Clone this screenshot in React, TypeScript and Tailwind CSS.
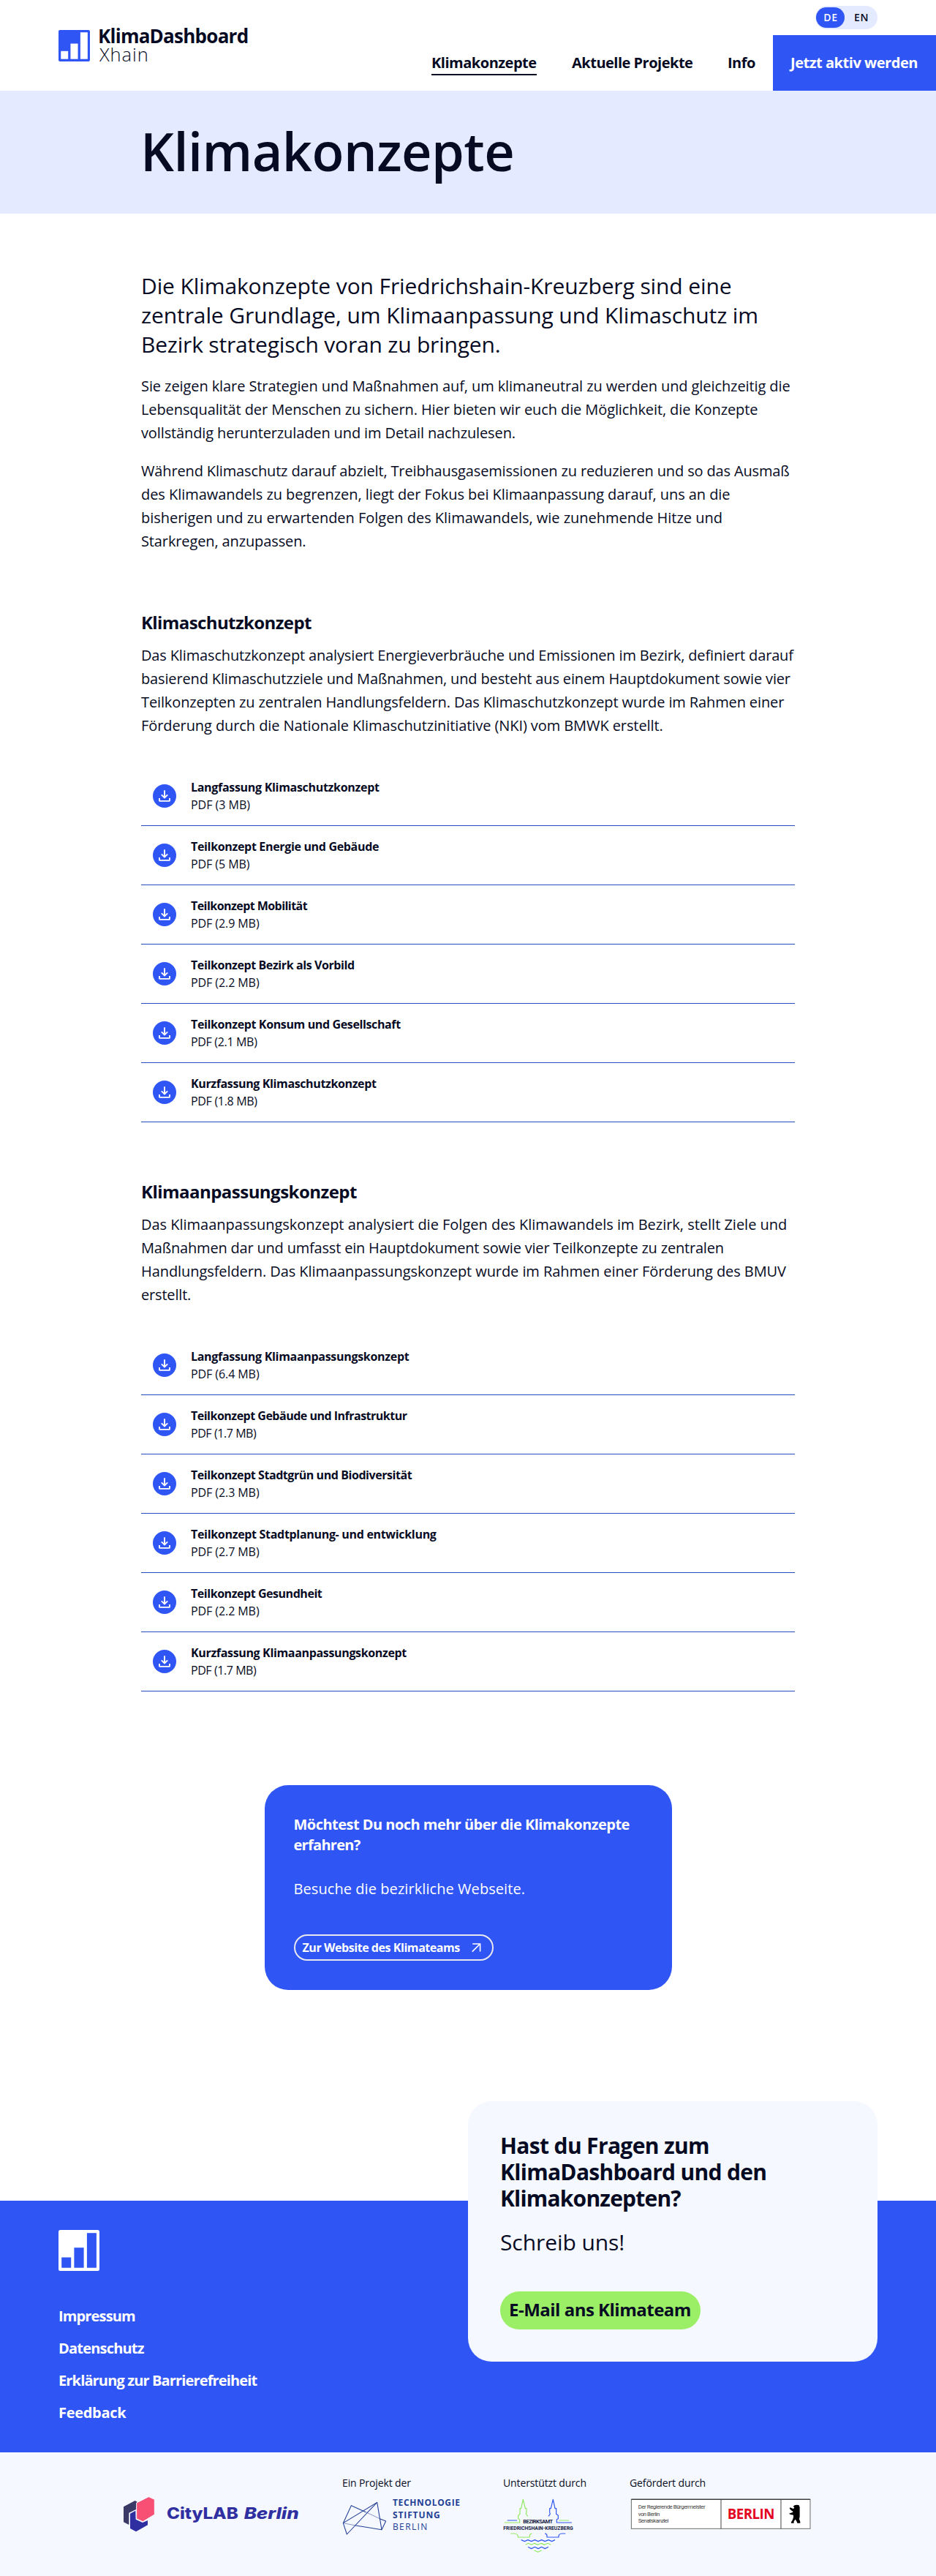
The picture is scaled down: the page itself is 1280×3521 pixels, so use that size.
import React from "react";

type Line = [text: string, tracking: string];

const intro: Line[] = [
  ["Die Klimakonzepte von Friedrichshain-Kreuzberg sind eine", "tracking-[-0.11px]"],
  ["zentrale Grundlage, um Klimaanpassung und Klimaschutz im", "tracking-[-0.09px]"],
  ["Bezirk strategisch voran zu bringen.", "tracking-[-0.19px]"],
];

const about: Line[] = [
  ["Sie zeigen klare Strategien und Maßnahmen auf, um klimaneutral zu werden und gleichzeitig die", "tracking-[-0.088px]"],
  ["Lebensqualität der Menschen zu sichern. Hier bieten wir euch die Möglichkeit, die Konzepte", "tracking-[-0.101px]"],
  ["vollständig herunterzuladen und im Detail nachzulesen.", "tracking-[-0.12px]"],
];

const difference: Line[] = [
  ["Während Klimaschutz darauf abzielt, Treibhausgasemissionen zu reduzieren und so das Ausmaß", "tracking-[-0.143px]"],
  ["des Klimawandels zu begrenzen, liegt der Fokus bei Klimaanpassung darauf, uns an die", "tracking-[-0.053px]"],
  ["bisherigen und zu erwartenden Folgen des Klimawandels, wie zunehmende Hitze und", "tracking-[-0.022px]"],
  ["Starkregen, anzupassen.", "tracking-[-0.12px]"],
];

type Download = { title: string; tracking: string; size: string };
type Concept = { title: string; titleTracking: string; text: Line[]; files: Download[] };

const concepts: Concept[] = [
  {
    title: "Klimaschutzkonzept",
    titleTracking: "tracking-[-0.6px]",
    text: [
      ["Das Klimaschutzkonzept analysiert Energieverbräuche und Emissionen im Bezirk, definiert darauf", "tracking-[-0.148px]"],
      ["basierend Klimaschutzziele und Maßnahmen, und besteht aus einem Hauptdokument sowie vier", "tracking-[-0.142px]"],
      ["Teilkonzepten zu zentralen Handlungsfeldern. Das Klimaschutzkonzept wurde im Rahmen einer", "tracking-[-0.122px]"],
      ["Förderung durch die Nationale Klimaschutzinitiative (NKI) vom BMWK erstellt.", "tracking-[-0.083px]"],
    ],
    files: [
      { title: "Langfassung Klimaschutzkonzept", tracking: "tracking-[-0.3px]", size: "3 MB" },
      { title: "Teilkonzept Energie und Gebäude", tracking: "tracking-[-0.33px]", size: "5 MB" },
      { title: "Teilkonzept Mobilität", tracking: "tracking-[-0.55px]", size: "2.9 MB" },
      { title: "Teilkonzept Bezirk als Vorbild", tracking: "tracking-[-0.4px]", size: "2.2 MB" },
      { title: "Teilkonzept Konsum und Gesellschaft", tracking: "tracking-[-0.37px]", size: "2.1 MB" },
      { title: "Kurzfassung Klimaschutzkonzept", tracking: "tracking-[-0.37px]", size: "1.8 MB" },
    ],
  },
  {
    title: "Klimaanpassungskonzept",
    titleTracking: "tracking-[-0.53px]",
    text: [
      ["Das Klimaanpassungskonzept analysiert die Folgen des Klimawandels im Bezirk, stellt Ziele und", "tracking-[-0.013px]"],
      ["Maßnahmen dar und umfasst ein Hauptdokument sowie vier Teilkonzepte zu zentralen", "tracking-[-0.191px]"],
      ["Handlungsfeldern. Das Klimaanpassungskonzept wurde im Rahmen einer Förderung des BMUV", "tracking-[-0.077px]"],
      ["erstellt.", "tracking-[-0.178px]"],
    ],
    files: [
      { title: "Langfassung Klimaanpassungskonzept", tracking: "tracking-[-0.3px]", size: "6.4 MB" },
      { title: "Teilkonzept Gebäude und Infrastruktur", tracking: "tracking-[-0.5px]", size: "1.7 MB" },
      { title: "Teilkonzept Stadtgrün und Biodiversität", tracking: "tracking-[-0.44px]", size: "2.3 MB" },
      { title: "Teilkonzept Stadtplanung- und entwicklung", tracking: "tracking-[-0.31px]", size: "2.7 MB" },
      { title: "Teilkonzept Gesundheit", tracking: "tracking-[-0.45px]", size: "2.2 MB" },
      { title: "Kurzfassung Klimaanpassungskonzept", tracking: "tracking-[-0.34px]", size: "1.7 MB" },
    ],
  },
];

const pdfTracking: Record<string, string> = {
  "3 MB": "tracking-[-0.01px]",
  "5 MB": "tracking-[-0.07px]",
  "1.8 MB": "tracking-[-0.31px]",
  "1.7 MB": "tracking-[-0.43px]",
  "2.1 MB": "tracking-[-0.33px]",
};

function Lines({ lines, className }: { lines: Line[]; className: string }) {
  return (
    <p className={className}>
      {lines.map(([text, tracking]) => (
        <span key={text} className={`block whitespace-nowrap ${tracking}`}>
          {text}
        </span>
      ))}
    </p>
  );
}

function BarsLogo({ className, bars }: { className: string; bars: string }) {
  return (
    <svg viewBox="0 0 56 56" className={className}>
      <rect width="56" height="56" rx="2.5" fill="currentColor" />
      <g fill={bars}>
        <rect x="4.2" y="37.5" width="13" height="14.2" />
        <rect x="21.4" y="24.2" width="13.2" height="27.5" />
        <rect x="38.9" y="4.2" width="13" height="47.5" />
      </g>
    </svg>
  );
}

function DownloadIcon() {
  return (
    <svg viewBox="0 0 32 32" className="h-8 w-8 shrink-0">
      <circle cx="16" cy="16" r="16" fill="#2f55f4" />
      <g fill="none" stroke="#fff" strokeWidth="1.9">
        <path d="M16 8.3V19" />
        <path d="M11.8 14.3 16 18.5 20.2 14.3" />
        <path d="M9 19v3.2a.7.7 0 0 0 .7.7h12.6a.7.7 0 0 0 .7-.7V19" />
      </g>
    </svg>
  );
}

function Header() {
  return (
    <header className="flex h-[124px] justify-between">
      <div className="flex items-start pt-10 pl-20">
        <BarsLogo className="mt-px h-[43px] w-[43px] text-[#2f55f4]" bars="#fff" />
        <div className="-mt-[3px] ml-[11px] leading-[25px]">
          <div className="text-[26px] font-bold tracking-[-0.75px]">KlimaDashboard</div>
          <div className="pl-[2px] text-[25.5px] font-light tracking-[0.9px]">Xhain</div>
        </div>
      </div>
      <div className="flex flex-col">
        <div className="flex h-12 justify-end pt-2 pr-20">
          <div className="flex h-8 items-center rounded-full bg-[#e4eaff] pl-px text-sm font-semibold">
            <span className="flex h-7 w-[39px] items-center justify-center rounded-full bg-[#2f55f4] pl-px tracking-[0.8px] text-white">DE</span>
            <span className="flex w-[45px] justify-center pl-px tracking-[0.6px]">EN</span>
          </div>
        </div>
        <nav className="flex h-[76px] items-stretch text-xl leading-7 font-bold whitespace-nowrap">
          <div className="mr-12 w-36 pt-6">
            <a className="block h-[31px] border-b-2 border-[#060b23] tracking-[-0.48px]">Klimakonzepte</a>
          </div>
          <a className="mr-12 w-[165px] pt-6 tracking-[-0.5px]">Aktuelle Projekte</a>
          <a className="mr-6 w-[38px] pt-6 tracking-[-0.5px]">Info</a>
          <a className="w-[223px] bg-[#2f55f4] pt-6 pl-6 tracking-[-0.46px] text-white">Jetzt aktiv werden</a>
        </nav>
      </div>
    </header>
  );
}

function ConceptSection({ concept }: { concept: Concept }) {
  return (
    <section className="mt-[79px]">
      <h2 className={`mb-[13px] text-2xl leading-8 font-bold ${concept.titleTracking}`}>{concept.title}</h2>
      <Lines lines={concept.text} className="mb-10 text-xl leading-8" />
      <ul>
        {concept.files.map((file) => (
          <li key={file.title} className="flex h-[81px] items-center border-b border-[#2b4bc4] pl-4">
            <DownloadIcon />
            <div className="-mt-px ml-5 leading-6 whitespace-nowrap">
              <div className={`font-bold ${file.tracking}`}>{file.title}</div>
              <div className={pdfTracking[file.size] ?? "tracking-[-0.08px]"}>PDF ({file.size})</div>
            </div>
          </li>
        ))}
      </ul>
    </section>
  );
}

function WebsiteCard() {
  return (
    <div className="mx-auto mt-32 h-[280px] w-[557px] rounded-[32px] bg-[#2f55f4] p-10 text-xl leading-7 whitespace-nowrap text-white">
      <p className="font-bold">
        <span className="block tracking-[-0.53px]">Möchtest Du noch mehr über die Klimakonzepte</span>
        <span className="block tracking-[-0.7px]">erfahren?</span>
      </p>
      <p className="mt-8 tracking-[0.07px]">Besuche die bezirkliche Webseite.</p>
      <a className="mt-12 flex h-9 w-[273px] items-center rounded-full border-2 border-[#e8e8ee] pl-2.5 text-base leading-6 font-bold">
        <span className="-mt-px w-[218px] tracking-[-0.44px]">Zur Website des Klimateams</span>
        <svg viewBox="0 0 24 24" className="ml-[7px] h-6 w-6" fill="none" stroke="currentColor" strokeWidth="1.6">
          <path d="M6.8 17.6 17.2 7.2M7.2 7h10.4v10.6" />
        </svg>
      </a>
    </div>
  );
}

function ContactCard() {
  return (
    <div className="-mt-[136px] h-[356px] w-[560px] rounded-[32px] bg-[#f5f8ff] pt-[43px] pl-11 text-[30px] leading-9 whitespace-nowrap">
      <p className="font-bold">
        <span className="block tracking-[-0.65px]">Hast du Fragen zum</span>
        <span className="block tracking-[-0.69px]">KlimaDashboard und den</span>
        <span className="block tracking-[-0.8px]">Klimakonzepten?</span>
      </p>
      <p className="mt-6 tracking-[-0.08px]">Schreib uns!</p>
      <a className="mt-[49px] flex h-[52px] w-[274px] items-center rounded-full bg-[#9bef66] pb-0.5 pl-3 text-2xl font-bold tracking-[-0.5px]">
        E-Mail ans Klimateam
      </a>
    </div>
  );
}

function CityLabLogo() {
  return (
    <svg viewBox="87 219 723 144" className="mt-[61px] h-12 w-[241px] overflow-visible">
      <path fill="#3a3a66" d="M87 259 134 234 143 239 138 270 109 284V333L87 322Z" />
      <path fill="#2f2fa2" d="M114 287 136 275 137 311 165 324 186 315V334L138 361 114 348Z" />
      <path fill="#f84f74" stroke="#f5f8ff" strokeWidth="3" d="M140 243 190 218 214 229V291L166 320 140 308Z" />
      <g fill="#2f2fa2" fontFamily="Inter" fontSize="65" fontWeight="800">
        <text x="264" y="309" textLength="293" lengthAdjust="spacingAndGlyphs">CityLAB</text>
        <text x="581" y="309" textLength="225" lengthAdjust="spacingAndGlyphs" fontStyle="italic">Berlin</text>
      </g>
    </svg>
  );
}

function TechnologieStiftungLogo() {
  return (
    <svg viewBox="985 225 485 150" className="mt-[11px] h-[50px] w-[161.67px] overflow-visible">
      <g fill="none" stroke="#233f94" strokeWidth="3.2" strokeLinejoin="round">
        <path d="M1147 353 1128 241 989 326 1022 254 1082 281M1141 309 1164 318 1147 353 1040 336" />
        <path d="M989 326 1004 372 1128 241" />
        <path strokeWidth="1.6" d="M1082 281 1141 309M989 326 1040 336" />
      </g>
      <g fill="#233f94" fontFamily="Open Sans" fontSize="36" fontWeight="700">
        <text x="1192" y="254" textLength="276">TECHNOLOGIE</text>
        <text x="1192" y="306" textLength="194">STIFTUNG</text>
        <text x="1192" y="355" textLength="142" fontWeight="400">BERLIN</text>
      </g>
    </svg>
  );
}

function BezirksamtLogo() {
  return (
    <svg viewBox="145 226 290 224" className="mt-[11px] h-[74.67px] w-[96.67px] overflow-visible">
      <g fill="none" stroke="#93e862" strokeWidth="3.6" strokeLinejoin="round">
        <path d="M151 325H213V312L207 309V296L214 290V267H219L227 230 236 267H241V283L239 290 247 299" />
        <path d="M375 316H415M176 370H192Q204 371 206 380V385H254V378Q255 371 263 370" />
        <path d="M237 416 249 410 261 416 274 410 288 416 301 410 315 416 328 410 341 416M273 439 288 446 303 439" />
      </g>
      <g fill="none" stroke="#3159ee" strokeWidth="3.6" strokeLinejoin="round">
        <path d="M427 325H365V312L371 309V296L363 290V267H358L350 230 341 267H336V283L338 290 331 299" />
        <path d="M162 316H202M401 370H386Q374 371 373 380V385H325V378Q325 371 316 370" />
        <path d="M219 396 233 402 247 396 261 402 275 396 289 402 303 396 317 402 331 396 345 402 358 396M247 425 261 432 275 425 289 432 303 425 317 432 331 425" />
      </g>
      <g fill="#15203f" fontFamily="Roboto" fontSize="22" fontWeight="700">
        <text x="227" y="329" textLength="122">BEZIRKSAMT</text>
        <text x="146" y="356" textLength="286" lengthAdjust="spacingAndGlyphs">FRIEDRICHSHAIN-KREUZBERG</text>
      </g>
    </svg>
  );
}

function SenatskanzleiLogo() {
  return (
    <svg viewBox="666 226 746 128" className="mt-[11px] h-[42.67px] w-[248.67px]">
      <rect x="673" y="230" width="734" height="120" fill="#fff" stroke="#6b6b6b" strokeWidth="3" />
      <path d="M673 229.5H1407" stroke="#1c1c1c" strokeWidth="3" />
      <path d="M1041 230V350M1287 230V350" stroke="#444" strokeWidth="3" />
      <g fill="#3c3c3c" fontFamily="Roboto" fontSize="23.5">
        <text x="701" y="269" textLength="276">Der Regierende Bürgermeister</text>
        <text x="701" y="298" textLength="89">von Berlin</text>
        <text x="701" y="326" textLength="125">Senatskanzlei</text>
      </g>
      <text x="1067" y="310" textLength="194" fill="#e40422" fontFamily="Open Sans" fontSize="56" fontWeight="700">BERLIN</text>
      <path
        fill="#000"
        d="M1343 254 1352 252 1361 254 1364 262V300L1362 311 1366 321V327H1354L1351 319 1346 312 1340 320V327H1329V323L1334 315 1338 304V294L1326 292 1320 288 1336 282V279L1329 275 1322 267 1325 263 1338 269 1342 263 1337 259Z"
      />
    </svg>
  );
}

const footerLinks: Line[] = [
  ["Impressum", "tracking-[-0.85px]"],
  ["Datenschutz", "tracking-[-0.8px]"],
  ["Erklärung zur Barrierefreiheit", "tracking-[-0.85px]"],
  ["Feedback", "tracking-[-0.3px]"],
];

function Footer() {
  return (
    <footer className="mt-72">
      <div className="flex h-[344px] justify-between bg-[#2f55f4] px-20">
        <div className="pt-10">
          <BarsLogo className="h-14 w-14 text-white" bars="#2f55f4" />
          <ul className="mt-12 flex flex-col gap-4 text-xl leading-7 font-bold text-white">
            {footerLinks.map(([text, tracking]) => (
              <li key={text} className={tracking}>{text}</li>
            ))}
          </ul>
        </div>
        <ContactCard />
      </div>
      <div className="flex h-[169px] bg-[#f5f8ff] pl-[169px] text-sm tracking-[-0.12px] whitespace-nowrap">
        <CityLabLogo />
        <div className="ml-[58px] w-[220px] pt-8">
          Ein Projekt der
          <TechnologieStiftungLogo />
        </div>
        <div className="w-[173px] pt-8">
          Unterstützt durch
          <BezirksamtLogo />
        </div>
        <div className="pt-8">
          Gefördert durch
          <SenatskanzleiLogo />
        </div>
      </div>
    </footer>
  );
}

export default function App() {
  return (
    <div className="w-[1280px] bg-white font-['Open_Sans',sans-serif] text-[#060b23]">
      <Header />
      <div className="flex h-[168px] items-center bg-[#e4eaff] pb-[5px] pl-48">
        <h1 className="text-[72px] leading-[72px] font-semibold tracking-[-0.54px]">Klimakonzepte</h1>
      </div>
      <main className="mx-auto w-[894px] pt-[79px]">
        <Lines lines={intro} className="text-[30px] leading-10" />
        <Lines lines={about} className="mt-[21px] text-xl leading-8" />
        <Lines lines={difference} className="mt-5 text-xl leading-8" />
        {concepts.map((concept) => (
          <ConceptSection key={concept.title} concept={concept} />
        ))}
        <WebsiteCard />
      </main>
      <Footer />
    </div>
  );
}
